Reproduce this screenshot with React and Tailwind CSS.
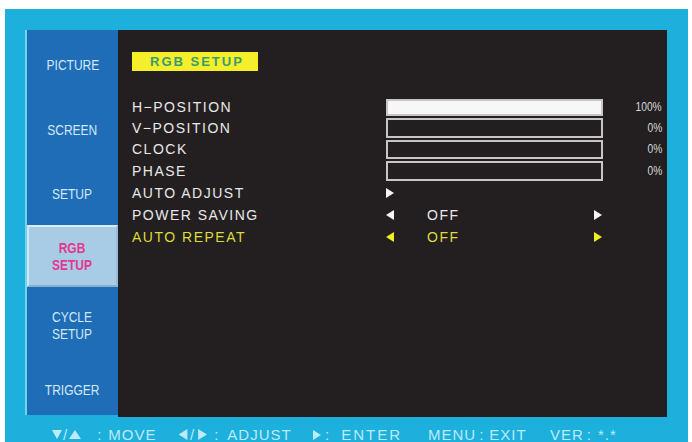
import React from "react";

const F = { fontFamily: '"Liberation Sans", Arial, sans-serif' };

function TriR({ c = "#f2f2f2", w = 8, h = 10 }) {
  return (
    <svg width={w} height={h} viewBox="0 0 8 10" className="block">
      <polygon points="0,0 8,5 0,10" fill={c} />
    </svg>
  );
}
function TriL({ c = "#f2f2f2", w = 8, h = 10 }) {
  return (
    <svg width={w} height={h} viewBox="0 0 8 10" className="block">
      <polygon points="8,0 0,5 8,10" fill={c} />
    </svg>
  );
}
function TriD({ c, w = 10, h = 9 }) {
  return (
    <svg width={w} height={h} viewBox="0 0 10 9" className="block">
      <polygon points="0,0 10,0 5,9" fill={c} />
    </svg>
  );
}
function TriU({ c, w = 12, h = 9 }) {
  return (
    <svg width={w} height={h} viewBox="0 0 12 9" className="block">
      <polygon points="6,0 12,9 0,9" fill={c} />
    </svg>
  );
}

function SideItem({ h, children }) {
  return (
    <div className={`flex items-center justify-center ${h}`}>
      <div className="inline-block scale-x-[0.8] text-center text-[15px] leading-[17px] text-[#d2e8f8]">
        {children}
      </div>
    </div>
  );
}

function BarRow({ label, pct, filled, h, bh }) {
  return (
    <div className={`flex items-center ${h}`}>
      <div className="w-[254px] text-[14px] leading-none tracking-[1.5px] text-[#e8e8e8]">{label}</div>
      <div
        className={`w-[217px] ${bh} border-2 border-[#c6c6c6] ${filled ? "bg-[#f7f7f7]" : "bg-[#231f20]"}`}
      />
      <div className="w-[59px] text-right text-[12px] leading-none text-[#d9d9d9]">
        <span className="inline-block origin-right scale-x-[0.85]">{pct}</span>
      </div>
    </div>
  );
}

function ArrowRow({ label, color, textColor, value, right }) {
  return (
    <div className="flex h-[22px] items-center">
      <div className={`w-[254px] text-[14px] leading-none tracking-[1.5px] ${textColor}`}>{label}</div>
      {value ? (
        <>
          <div className="w-[41px]">
            <TriL c={color} />
          </div>
          <div className={`w-[167px] text-[14px] leading-none tracking-[1.5px] ${textColor}`}>{value}</div>
          {right && <TriR c={color} />}
        </>
      ) : (
        <TriR c={color} />
      )}
    </div>
  );
}

export default function App() {
  const fc = "#bfe9f6";
  return (
    <div className="h-[442px] w-[692px] overflow-hidden bg-white" style={F}>
      <div className="ml-[5px] mt-[9px] h-[433px] w-[683px] bg-[#1db0dc] pl-[20px] pt-[21px]">
        <div className="flex">
          {/* Sidebar */}
          <div className="h-[385px] w-[93px] border-l-2 border-[#72d3f0] bg-[#1f6db6] pt-[2px]">
            <SideItem h="h-[65px]">PICTURE</SideItem>
            <SideItem h="h-[65px]">SCREEN</SideItem>
            <SideItem h="h-[63px]">SETUP</SideItem>
            <div className="flex h-[62px] flex-col items-center justify-center border-2 border-t-[#d8ecf8] border-l-[#cfe6f5] border-b-[#86afd0] border-r-[#93bad8] bg-[#a9cce6]">
              <div className="inline-block scale-x-[0.8] text-center text-[15px] font-bold leading-[17px] text-[#e4378f]">
                RGB
                <br />
                SETUP
              </div>
            </div>
            <SideItem h="h-[76px]">
              CYCLE
              <br />
              SETUP
            </SideItem>
            <SideItem h="h-[52px]">TRIGGER</SideItem>
          </div>

          {/* Main panel */}
          <div className="h-[387px] w-[549px] bg-[#231f20] pl-[14px] pt-[22px]">
            <div className="flex h-[19px] w-[126px] items-center bg-[#f4ef2a] pl-[18px]">
              <span className="text-[13px] font-bold leading-none tracking-[2px] text-[#3a9a72]">RGB SETUP</span>
            </div>
            <div className="mt-[26px]">
              <BarRow label="H−POSITION" pct="100%" filled h="h-[20px]" bh="h-[17px]" />
              <BarRow label="V−POSITION" pct="0%" h="h-[21px]" bh="h-[20px]" />
              <BarRow label="CLOCK" pct="0%" h="h-[22px]" bh="h-[19px]" />
              <BarRow label="PHASE" pct="0%" h="h-[22px]" bh="h-[20px]" />
              <ArrowRow label="AUTO ADJUST" color="#f4f4f4" textColor="text-[#e8e8e8]" />
              <ArrowRow label="POWER SAVING" color="#f4f4f4" textColor="text-[#e8e8e8]" value="OFF" right />
              <ArrowRow label="AUTO REPEAT" color="#f1ee1e" textColor="text-[#dcdc3a]" value="OFF" right />
            </div>
          </div>
        </div>

        {/* Footer */}
        <div className="ml-[27px] mt-[10px] flex h-[15px] items-center text-[15px] leading-[15px] tracking-[1px] text-[#bfe9f6]">
          <div className="flex w-[126px] items-center">
            <TriD c={fc} />
            <span className="mx-[1px]">/</span>
            <TriU c={fc} />
            <span className="ml-[16px]">:</span>
            <span className="ml-[6px]">MOVE</span>
          </div>
          <div className="flex w-[135px] items-center">
            <TriL c={fc} w={10} h={11} />
            <span className="mx-[2px]">/</span>
            <TriR c={fc} w={11} h={11} />
            <span className="ml-[6px]">:</span>
            <span className="ml-[8px]">ADJUST</span>
          </div>
          <div className="flex w-[115px] items-center">
            <TriR c={fc} w={8} h={10} />
            <span className="ml-[4px]">:</span>
            <span className="ml-[11px] tracking-[2px]">ENTER</span>
          </div>
          <div className="flex w-[122px] items-center">
            <span>MENU</span>
            <span className="ml-[3px]">:</span>
            <span className="ml-[5px]">EXIT</span>
          </div>
          <div className="flex items-center">
            <span>VER</span>
            <span className="ml-[3px]">:</span>
            <span className="ml-[6px]">*.*</span>
          </div>
        </div>
      </div>
    </div>
  );
}
